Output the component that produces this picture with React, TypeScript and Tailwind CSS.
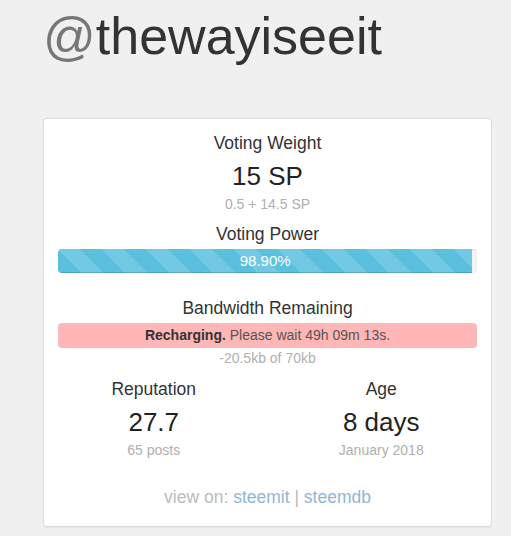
import React from "react";

export default function App() {
  const stripes: React.CSSProperties = {
    width: "98.9%",
    backgroundImage:
      "linear-gradient(45deg, rgba(255,255,255,0.15) 25%, transparent 25%, transparent 50%, rgba(255,255,255,0.15) 50%, rgba(255,255,255,0.15) 75%, transparent 75%, transparent)",
    backgroundSize: "44px 44px",
  };
  return (
    <div className="min-h-screen bg-[#f0f0f0] font-['Liberation_Sans',Arial,sans-serif] text-[#333]">
      <div className="pl-[43px] pt-[8px]">
        <h1 className="text-[52px] leading-[57px] text-[#333]">
          <span className="text-[#777]">@</span>thewayiseeit
        </h1>
        <div className="mt-[53px] w-[449px] rounded-[4px] border border-[#dcdcdc] bg-white px-[14px] pt-[12px] pb-[16px] text-center shadow-[0_1px_1px_rgba(0,0,0,0.05)]">
          <div className="text-[17.5px] leading-[25px]">Voting Weight</div>
          <div className="mt-[5px] text-[26px] leading-[30px] text-[#222]">15 SP</div>
          <div className="mt-[3px] text-[14px] leading-[20px] text-[#b0b0b0]">0.5 + 14.5 SP</div>
          <div className="mt-[8px] text-[17.5px] leading-[25px]">Voting Power</div>
          <div className="mt-[2px] h-[24px] overflow-hidden rounded-[4px] bg-[#f5f5f5] shadow-[inset_0_1px_2px_rgba(0,0,0,0.1)]">
            <div
              className="h-full bg-[#5bc0de] text-[15px] leading-[24px] text-white shadow-[inset_0_-1px_0_rgba(0,0,0,0.15)]"
              style={stripes}
            >
              98.90%
            </div>
          </div>
          <div className="mt-[23px] text-[17.5px] leading-[25px]">Bandwidth Remaining</div>
          <div className="mt-[2px] h-[25px] rounded-[4px] bg-[#ffb6b6] text-[14px] leading-[25px] text-[#333]">
            <b>Recharging.</b> <span className="text-[#555]">Please wait 49h 09m 13s.</span>
          </div>
          <div className="text-[14px] leading-[20px] text-[#b0b0b0]">-20.5kb of 70kb</div>
          <div className="-mx-[14px] mt-[9px] grid grid-cols-2 gap-x-[8px]">
            <div>
              <div className="text-[17.5px] leading-[25px]">Reputation</div>
              <div className="mt-[5px] text-[26px] leading-[30px] text-[#222]">27.7</div>
              <div className="mt-[3px] text-[14px] leading-[20px] text-[#b0b0b0]">65 posts</div>
            </div>
            <div>
              <div className="text-[17.5px] leading-[25px]">Age</div>
              <div className="mt-[5px] text-[26px] leading-[30px] text-[#222]">8 days</div>
              <div className="mt-[3px] text-[14px] leading-[20px] text-[#b0b0b0]">January 2018</div>
            </div>
          </div>
          <div className="mt-[25px] text-[17.5px] leading-[25px] text-[#bbb]">
            view on: <a className="text-[#8fb6d8]">steemit</a> | <a className="text-[#8fb6d8]">steemdb</a>
          </div>
        </div>
      </div>
    </div>
  );
}
